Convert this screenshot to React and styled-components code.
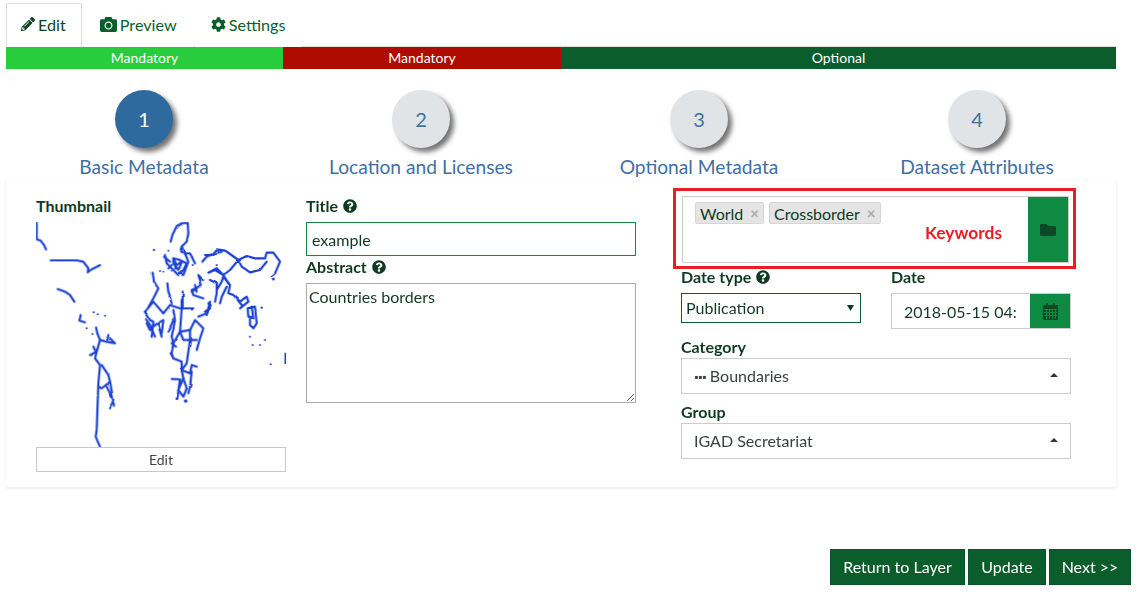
import React from "react";
import styled, { createGlobalStyle } from "styled-components";
import { FaPencilAlt, FaCamera, FaCog, FaQuestionCircle, FaFolder } from "react-icons/fa";

const Global = createGlobalStyle`
  html, body { margin: 0; padding: 0; background: #fff; }
  body { font-family: Lato, "Open Sans", sans-serif; color: #0f3a22; }
  * { box-sizing: border-box; }
`;

const Page = styled.div`
  width: 1138px;
  height: 597px;
  padding: 3px 7px 0 6px;
  overflow: hidden;
  font-size: 16px;
`;

const Tabs = styled.nav`
  display: flex;
  gap: 2px;
  height: 44px;
  width: 1110px;
  border-bottom: 1px solid #ddd;
`;

const Tab = styled.div`
  display: flex;
  align-items: center;
  gap: 3px;
  height: 44px;
  padding: 0 15px 2px ${(p) => (p.$active ? "14px" : "15px")};
  font-size: 16.2px;
  color: ${(p) => (p.$active ? "#0c4424" : "#0b5e2c")};
  background: #fff;
  border: 1px solid ${(p) => (p.$active ? "#ddd" : "transparent")};
  border-bottom: ${(p) => (p.$active ? "1px solid #fff" : "none")};
  svg { font-size: ${(p) => p.$iconSize || 15}px; }
`;

const Progress = styled.div`
  display: grid;
  grid-template-columns: 277px 278px 555px;
  width: 1110px;
  height: 22px;
`;

const Segment = styled.div`
  background: ${(p) => p.$color};
  color: #fff;
  font-size: 14px;
  line-height: 22px;
  text-align: center;
`;

const Steps = styled.div`
  display: grid;
  grid-template-columns: 276px 278px 278px 278px;
  width: 1110px;
  margin-top: 21px;
`;

const Step = styled.div`
  display: flex;
  flex-direction: column;
  align-items: center;
`;

const Circle = styled.div`
  width: 58px;
  height: 58px;
  border-radius: 50%;
  display: flex;
  align-items: center;
  justify-content: center;
  font-size: 20px;
  background: ${(p) => (p.$active ? "#2e6a9e" : "#e0e4e6")};
  color: ${(p) => (p.$active ? "#fff" : "#3f6fa3")};
  box-shadow: 4px 4px 5px rgba(0, 0, 0, 0.55);
`;

const StepLabel = styled.div`
  margin-top: 5px;
  font-size: 19.2px;
  line-height: 28px;
  color: #3f6fa3;
  white-space: nowrap;
`;

const Panel = styled.section`
  width: 1110px;
  height: 306px;
  display: flex;
  padding: 0 0 0 30px;
  box-shadow: 0 1px 3px rgba(0, 0, 0, 0.1);
`;

const ThumbColumn = styled.div`
  width: 250px;
  padding-top: 16px;
`;

const Label = styled.div`
  display: flex;
  align-items: center;
  gap: 5px;
  font-size: 16px;
  font-weight: 700;
  line-height: 18px;
  color: #0f3a22;
  svg { font-size: 14px; color: #0f3a22; }
`;

const Map = styled.svg`
  display: block;
  width: 250px;
  height: 225px;
  margin-top: 7px;
`;

const EditButton = styled.div`
  height: 25px;
  border: 1px solid #c8c8c8;
  text-align: center;
  font-size: 14px;
  line-height: 24px;
  color: #444;
`;

const MiddleColumn = styled.div`
  width: 330px;
  margin-left: 20px;
  padding-top: 16px;
`;

const TextInput = styled.input`
  display: block;
  width: 330px;
  height: 34px;
  margin: 7px 0 2px;
  padding: 0 5px;
  border: 1px solid #0e8a42;
  outline: none;
  font: 16px Lato, sans-serif;
  color: #0f3a22;
`;

const TextArea = styled.textarea`
  display: block;
  width: 330px;
  height: 120px;
  margin-top: 7px;
  padding: 4px 2px;
  border: 1px solid #aaa;
  border-radius: 0;
  outline: none;
  font: 16px/18px Lato, sans-serif;
  color: #0f3a22;
`;

const RightColumn = styled.div`
  width: 403px;
  margin-left: 37px;
  padding-top: 7px;
`;

const KeywordFrame = styled.div`
  position: relative;
  width: 403px;
  height: 81px;
  border: 3px solid #ed1c24;
  padding: 5px 4px 3px 6px;
`;

const KeywordBox = styled.div`
  display: flex;
  justify-content: space-between;
  height: 67px;
  width: 387px;
  border: 1px solid #ccc;
`;

const Chips = styled.div`
  display: flex;
  align-items: flex-start;
  gap: 5px;
  padding: 5px 0 0 12px;
`;

const Chip = styled.span`
  display: flex;
  align-items: center;
  gap: 7px;
  height: 22px;
  padding: 0 4px 0 4px;
  background: #e4e4e4;
  border: 1px solid #d5d5d5;
  border-radius: 2px;
  font-size: 16px;
  color: #0f3a22;
`;

const ChipClose = styled.span`
  color: #aaa;
  font-size: 15px;
  font-weight: 700;
`;

const KeywordNote = styled.span`
  position: absolute;
  left: 249px;
  top: 33px;
  color: #ed1c24;
  font-size: 17.4px;
  font-weight: 700;
  line-height: 18px;
`;

const FolderButton = styled.div`
  width: 40px;
  flex: none;
  display: flex;
  align-items: center;
  justify-content: center;
  background: #0e8a42;
  color: #0b4a25;
  font-size: 16px;
`;

const Fields = styled.div`
  width: 390px;
  margin: -1px 0 0 8px;
`;

const DateRow = styled.div`
  display: flex;
`;

const DateTypeCell = styled.div`
  width: 210px;
`;

const NativeSelect = styled.select`
  display: block;
  appearance: none;
  width: 180px;
  height: 30px;
  margin-top: 7px;
  padding: 0 0 2px 4px;
  border: 1px solid #0b5e2c;
  border-radius: 0;
  background: #fff url("data:image/svg+xml,%3Csvg xmlns='http://www.w3.org/2000/svg' width='7' height='6'%3E%3Cpath d='M0 0h7L3.5 6z' fill='%230f3a22'/%3E%3C/svg%3E") no-repeat right 6px center;
  outline: none;
  font: 16px Lato, sans-serif;
  color: #0f3a22;
`;

const DateCell = styled.div`
  width: 180px;
`;

const DateGroup = styled.div`
  display: flex;
  height: 36px;
  margin-top: 7px;
`;

const DateInput = styled.input`
  width: 139px;
  height: 36px;
  padding: 0 12px;
  border: 1px solid #ccc;
  border-right: none;
  outline: none;
  font: 16px Lato, sans-serif;
  color: #0f3a22;
`;

const CalendarButton = styled.div`
  width: 41px;
  display: flex;
  align-items: center;
  justify-content: center;
  background: #0e8a42;
  border: 1px solid #ccc;
  border-left: none;
`;

const FieldLabel = styled(Label)`
  margin-top: ${(p) => p.$top}px;
`;

const Dropdown = styled.div`
  display: flex;
  align-items: center;
  justify-content: space-between;
  width: 390px;
  height: 36px;
  margin-top: 2px;
  padding: 0 12px 2px;
  border: 1px solid #ccc;
  font-size: 16px;
  color: #3a3f42;
`;

const Indent = styled.span`
  font-size: 11px;
  letter-spacing: -0.5px;
  margin-right: 4px;
  vertical-align: 1px;
`;

const Caret = styled.span`
  width: 0;
  height: 0;
  border-left: 4px solid transparent;
  border-right: 4px solid transparent;
  border-bottom: 4px solid #333;
`;

const Actions = styled.div`
  display: flex;
  justify-content: flex-end;
  gap: 3px;
  width: 1125px;
  margin-top: 62px;
`;

const ActionButton = styled.div`
  width: ${(p) => p.$w}px;
  height: 36px;
  background: #0b5e2c;
  border: 1px solid #0a5227;
  color: #fff;
  font-size: 16px;
  line-height: 34px;
  text-align: center;
  white-space: nowrap;
`;

const americas = [
  "M50 98V148L62 152L72 165L78 178",
  "M92 211H170L190 215L205 235L203 247L215 238L240 225",
  "M113 297L135 305L150 315L163 335",
  "M182 375L178 392L195 397",
  "M228 412L232 430L240 450L230 485L210 495M220 470L225 480M230 485L225 505L240 525L235 580L230 720L227 740L240 770",
  "M245 525L265 555L270 575L245 595L235 590M270 575L280 630L270 655M280 640L282 650M260 590L280 630",
  "M240 450L260 455L265 435M260 455L285 460L270 445",
];

const europe = [
  "M92 65L97 45L110 18L125 10L143 8L145 40L140 65L125 80L135 100L150 100L165 130",
  "M125 80L120 95L135 100L145 125L130 165L118 160",
  "M75 105L80 130L100 150L115 165L130 150L140 130L120 120L100 115L100 130L115 150",
  "M100 115L110 135L125 125L118 145L105 145",
  "M72 110L90 125M95 135L85 145",
  "M38 158L42 185L55 205L40 235L25 262",
  "M82 190L85 215L95 250",
  "M155 210L185 195L175 165L190 180M155 210L160 225L190 235M165 195L170 215M155 215L170 205",
  "M128 215V265H160",
  "M187 125L200 110L225 100L245 95",
];

const africa = [
  "M15 35L40 5L70 40L90 15L120 25H158",
  "M125 0V25L120 95L100 130L95 160L100 175L125 185L125 210",
  "M100 30L105 60L95 110L100 130",
  "M15 35L30 60L40 65L35 110M20 70L30 90L45 75L70 60L65 100M55 75L65 110",
  "M18 58L30 75L45 110M100 60L85 95",
  "M120 95L150 90L165 60L190 85L180 115L170 150",
  "M150 90V120L140 190L125 210L150 220L155 195L170 200",
  "M120 95L130 120H150H170",
  "M95 237L120 238L112 295M125 210L130 235L115 270",
  "M155 215L150 260L145 280M130 235L140 265L130 290L115 270",
  "M95 130L108 140M100 175L92 160",
  "M175 50L200 40L212 15L205 10",
];

const asia = [
  "M0 45H20L35 28L60 32L75 42L100 60L125 48L150 55H180L185 38H205L225 65L210 100L200 108",
  "M100 60L110 80L135 97L165 90L185 65",
  "M100 60L75 90L55 105L35 85L10 98L30 90L55 105L70 130",
  "M15 120L35 130L35 160L30 185M55 110L50 125L35 150",
  "M55 110L75 135L70 160L85 165L105 185L125 170L130 185L105 205",
  "M65 140L50 170L45 190M90 170L110 195",
  "M130 230L128 205L150 200L155 250L145 265L135 255V230L145 235L140 200",
  "M15 185L5 225M15 205L0 215",
];

const dots = [
  [402, 180, 3.5], [221, 367, 3], [233, 373, 3], [255, 377, 3], [200, 415, 3], [217, 432, 3],
  [690, 440, 3], [698, 465, 3], [720, 465, 3], [735, 450, 3], [752, 523, 3], [725, 353, 3.5],
  [760, 267, 4.5], [497, 633, 5.5], [470, 627, 3.5], [420, 243, 3], [430, 245, 2.5], [590, 225, 3],
  [445, 182, 3], [455, 242, 2.5], [518, 225, 3],
];

function Trails({ x, y, paths }) {
  return (
    <g transform={`translate(${x} ${y})`}>
      {paths.map((d) => (
        <path key={d} d={d} />
      ))}
    </g>
  );
}

function WorldMap() {
  return (
    <Map viewBox="48 96 750 675" aria-label="Thumbnail map">
      <defs>
        <filter id="soft" filterUnits="userSpaceOnUse" x="48" y="96" width="750" height="675" colorInterpolationFilters="sRGB">
          <feTurbulence type="fractalNoise" baseFrequency="0.03" numOctaves="1" seed="4" result="noise" />
          <feDisplacementMap in="SourceGraphic" in2="noise" scale="7" xChannelSelector="R" yChannelSelector="G" />
          <feGaussianBlur stdDeviation="1" />
        </filter>
      </defs>
      <g filter="url(#soft)">
        <g fill="none" stroke="#1a40d2" strokeWidth="6.5" strokeLinejoin="round" strokeLinecap="round">
          <Trails x={0} y={0} paths={americas} />
          <Trails x={360} y={90} paths={europe} />
          <Trails x={360} y={330} paths={africa} />
          <Trails x={555} y={150} paths={asia} />
        </g>
        <g fill="#1a40d2">
          {dots.map(([cx, cy, r]) => (
            <circle key={`${cx}-${cy}`} cx={cx} cy={cy} r={r} />
          ))}
        </g>
      </g>
      <path d="M796 488V522" fill="none" stroke="#1a40d2" strokeWidth="5" />
    </Map>
  );
}

function CalendarIcon() {
  return (
    <svg width="15" height="17" viewBox="0 0 15 17" aria-hidden="true">
      <rect x="0" y="2" width="15" height="15" rx="1" fill="#0b4a25" />
      <rect x="3" y="0" width="2" height="4" fill="#0b4a25" />
      <rect x="10" y="0" width="2" height="4" fill="#0b4a25" />
      <path d="M1 6.5H14M1 9.5H14M1 12.5H14M3.5 6V16M6.5 6V16M9.5 6V16M12.5 6V16" stroke="#0e8a42" strokeWidth="1" fill="none" />
    </svg>
  );
}

const steps = [
  ["1", "Basic Metadata"],
  ["2", "Location and Licenses"],
  ["3", "Optional Metadata"],
  ["4", "Dataset Attributes"],
];

export default function App() {
  return (
    <Page>
      <Global />
      <Tabs>
        <Tab $active $iconSize={14}><FaPencilAlt />Edit</Tab>
        <Tab $iconSize={17}><FaCamera />Preview</Tab>
        <Tab><FaCog />Settings</Tab>
      </Tabs>
      <Progress>
        <Segment $color="#27cd3d">Mandatory</Segment>
        <Segment $color="#b00b00">Mandatory</Segment>
        <Segment $color="#0b5e2c">Optional</Segment>
      </Progress>
      <Steps>
        {steps.map(([n, label], i) => (
          <Step key={n}>
            <Circle $active={i === 0}>{n}</Circle>
            <StepLabel>{label}</StepLabel>
          </Step>
        ))}
      </Steps>
      <Panel>
        <ThumbColumn>
          <Label>Thumbnail</Label>
          <WorldMap />
          <EditButton>Edit</EditButton>
        </ThumbColumn>
        <MiddleColumn>
          <Label>Title <FaQuestionCircle /></Label>
          <TextInput defaultValue="example" />
          <Label>Abstract <FaQuestionCircle /></Label>
          <TextArea defaultValue="Countries borders" />
        </MiddleColumn>
        <RightColumn>
          <KeywordFrame>
            <KeywordBox>
              <Chips>
                <Chip>World <ChipClose>×</ChipClose></Chip>
                <Chip>Crossborder <ChipClose>×</ChipClose></Chip>
              </Chips>
              <FolderButton><FaFolder /></FolderButton>
            </KeywordBox>
            <KeywordNote>Keywords</KeywordNote>
          </KeywordFrame>
          <Fields>
            <DateRow>
              <DateTypeCell>
                <Label>Date type <FaQuestionCircle /></Label>
                <NativeSelect defaultValue="Publication">
                  <option>Publication</option>
                  <option>Creation</option>
                  <option>Revision</option>
                </NativeSelect>
              </DateTypeCell>
              <DateCell>
                <Label>Date</Label>
                <DateGroup>
                  <DateInput defaultValue="2018-05-15 04:15 PM" />
                  <CalendarButton><CalendarIcon /></CalendarButton>
                </DateGroup>
              </DateCell>
            </DateRow>
            <FieldLabel $top={9}>Category</FieldLabel>
            <Dropdown><span><Indent>▪▪▪</Indent>Boundaries</span><Caret /></Dropdown>
            <FieldLabel $top={9}>Group</FieldLabel>
            <Dropdown><span>IGAD Secretariat</span><Caret /></Dropdown>
          </Fields>
        </RightColumn>
      </Panel>
      <Actions>
        <ActionButton $w={135}>Return to Layer</ActionButton>
        <ActionButton $w={78}>Update</ActionButton>
        <ActionButton $w={82}>Next &gt;&gt;</ActionButton>
      </Actions>
    </Page>
  );
}
